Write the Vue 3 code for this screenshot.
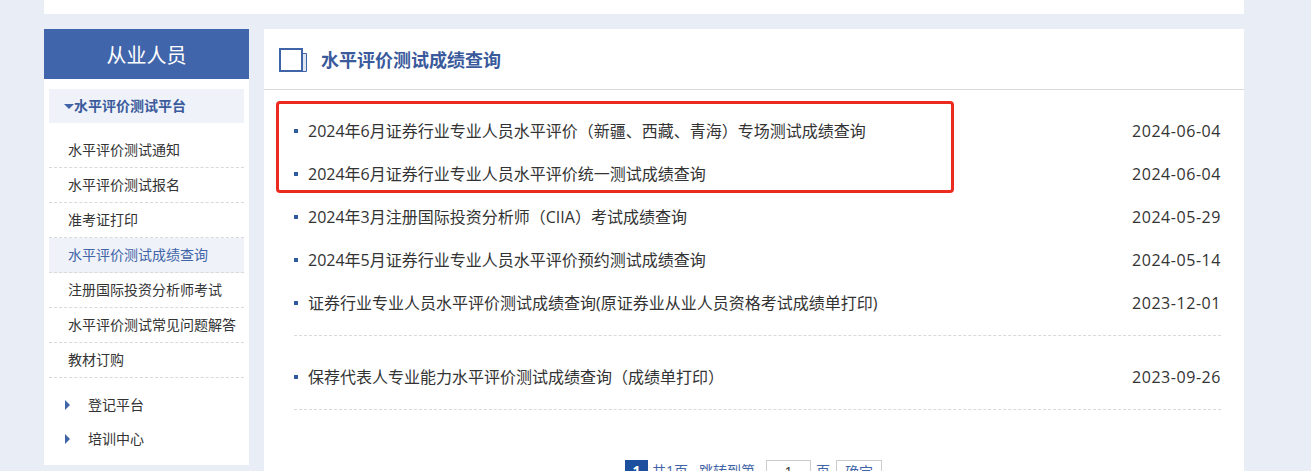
<script setup>
const side = [
  { t: '水平评价测试通知' },
  { t: '水平评价测试报名' },
  { t: '准考证打印' },
  { t: '水平评价测试成绩查询', on: true },
  { t: '注册国际投资分析师考试' },
  { t: '水平评价测试常见问题解答' },
  { t: '教材订购' },
]
const listA = [
  ['2024年6月证券行业专业人员水平评价（新疆、西藏、青海）专场测试成绩查询', '2024-06-04'],
  ['2024年6月证券行业专业人员水平评价统一测试成绩查询', '2024-06-04'],
  ['2024年3月注册国际投资分析师（CIIA）考试成绩查询', '2024-05-29'],
  ['2024年5月证券行业专业人员水平评价预约测试成绩查询', '2024-05-14'],
  ['证券行业专业人员水平评价测试成绩查询(原证券业从业人员资格考试成绩单打印)', '2023-12-01'],
]
const listB = [['保荐代表人专业能力水平评价测试成绩查询（成绩单打印）', '2023-09-26']]
</script>

<template>
  <div class="page">
    <div class="top"></div>
    <div class="wrap">
      <aside class="side">
        <h2 class="side-title">从业人员</h2>
        <div class="group"><i class="tri-down"></i>水平评价测试平台</div>
        <ul class="menu">
          <li v-for="s in side" :key="s.t" :class="{ on: s.on }">{{ s.t }}</li>
        </ul>
        <div class="extra"><i class="tri-right"></i>登记平台</div>
        <div class="extra"><i class="tri-right"></i>培训中心</div>
      </aside>
      <main class="main">
        <header class="head">
          <svg class="head-icon" width="29" height="25" viewBox="0 0 29 25">
            <path d="M1 1H23V23H1Z" fill="none" stroke="#3f64a8" stroke-width="2"/>
            <path d="M24 5.500H27.500V23.500H24" fill="#dfe6f2" stroke="#3f64a8" stroke-width="1"/>
          </svg>
          <h1>水平评价测试成绩查询</h1>
        </header>
        <div class="body">
          <ul class="list first">
            <li v-for="r in listA" :key="r[0]"><i></i><span class="name">{{ r[0] }}</span><span class="date">{{ r[1] }}</span></li>
          </ul>
          <ul class="list second">
            <li v-for="r in listB" :key="r[0]"><i></i><span class="name">{{ r[0] }}</span><span class="date">{{ r[1] }}</span></li>
          </ul>
          <div class="pager">
            <span class="cur">1</span>
            <span class="lnk first-lnk">共1页</span>
            <span class="lnk jump">跳转到第</span>
            <span class="inp">1</span>
            <span class="lnk">页</span>
            <span class="ok">确定</span>
          </div>
          <div class="mark"></div>
        </div>
      </main>
    </div>
  </div>
</template>

<style>
html, body { margin: 0; height: 100%; overflow: hidden; background: #e9edf5; }
</style>

<style scoped>
.page {
  height: 471px;
  overflow: hidden;
  background: #e9edf5;
  font-family: "Open Sans", "Noto Sans CJK SC", sans-serif;
  color: #333;
}
.top { width: 1200px; height: 14px; margin-left: 44px; background: #fff; }
.wrap { display: flex; gap: 15px; width: 1200px; margin: 15px 0 0 44px; align-items: flex-start; }
.side { width: 205px; height: 436px; background: #fff; box-sizing: border-box; flex: none; }
.side-title {
  margin: 0; height: 50px; line-height: 53px; text-align: center;
  background: #4165aa; color: #fff; font-size: 20px; font-weight: 400;
}
.group {
  display: flex; align-items: center; height: 34px; margin: 10px 5px 0;
  background: #eff2f8; color: #3a5a9c; font-size: 14px; font-weight: 700;
  padding-left: 15px; line-height: 30px;
}
.tri-down { width: 0; height: 0; border: 5px solid transparent; border-top: 5px solid #3f64a8; border-bottom: 0; }
.menu { list-style: none; margin: 10px 5px 0; padding: 0; }
.menu li {
  height: 34px; line-height: 34px; padding-left: 19px; font-size: 14px;
  border-bottom: 1px dashed #d9d9d9; color: #333; white-space: nowrap;
}
.menu li.on { background: #eff2f8; color: #3f64a8; }
.menu + .extra { margin-top: 10px; }
.extra { display: flex; align-items: center; height: 34px; line-height: 30px; padding-left: 21px; font-size: 14px; color: #333; }
.tri-right { width: 0; height: 0; margin-right: 18px; border: 5px solid transparent; border-left: 5px solid #3f64a8; border-right: 0; }
.main { width: 980px; height: 460px; background: #fff; flex: none; }
.head { display: flex; align-items: center; height: 60px; border-bottom: 1px solid #d9d9d9; padding-left: 15px; }
.head-icon { display: block; margin-right: 13px; margin-top: 3px; }
.head h1 { margin: 0; font-size: 18px; font-weight: 700; color: #3a5a9c; }
.body { position: relative; padding: 20px 23px 0 30px; }
.list { list-style: none; margin: 0; padding: 0; border-bottom: 1px dashed #d9d9d9; }
.list.first { padding-bottom: 10px; }
.list.second { padding: 20px 0 10px; }
.list li { display: flex; align-items: center; box-sizing: border-box; height: 43px; padding-bottom: 2px; line-height: 40px; font-size: 16px; color: #333; }
.list i { width: 4px; height: 4px; background: #2f5a9e; margin-right: 10px; flex: none; }
.name { flex: 1; white-space: nowrap; }
.date { font-size: 16px; letter-spacing: 0.55px; }
.pager { display: flex; align-items: flex-start; margin: 50px 0 0 331px; font-size: 14px; line-height: 22px; }
.cur { width: 23px; height: 23px; text-align: center; background: #1d4f9f; color: #fff; font-weight: 700; }
.lnk { color: #3f64a8; margin-left: 5px; }
.first-lnk { margin-left: 4px; }
.jump { margin-left: 11px; }
.inp { width: 43px; height: 40px; margin-left: 11px; text-align: center; border: 1px solid #ccc; }
.ok { width: 44px; height: 40px; margin-left: 6px; text-align: center; border: 1px solid #ccc; color: #3f64a8; }
.mark {
  position: absolute; left: 12px; top: 11px; width: 672px; height: 86px;
  border: 3px solid #ec2b20; border-radius: 4px;
}
</style>
